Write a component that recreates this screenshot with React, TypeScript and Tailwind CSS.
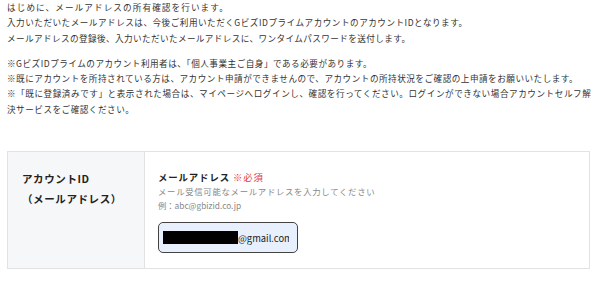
const App = () => {
  return (
    <div
      className="w-[600px] h-[282px] bg-white text-[#333] overflow-hidden pl-[7px]"
      style={{ fontFamily: '"Noto Sans CJK JP", "Noto Sans", sans-serif' }}
    >
      <div className="text-[8.6px] tracking-[0.5px] leading-[15.3px] whitespace-nowrap">
        <p className="tracking-[1.1px]">はじめに、メールアドレスの所有確認を行います。</p>
        <p>入力いただいたメールアドレスは、今後ご利用いただくGビズIDプライムアカウントのアカウントIDとなります。</p>
        <p className="tracking-[0.4px]">メールアドレスの登録後、入力いただいたメールアドレスに、ワンタイムパスワードを送付します。</p>
        <div className="mt-[10px]">
          <p>※GビズIDプライムのアカウント利用者は、「個人事業主ご自身」である必要があります。</p>
          <p>※既にアカウントを所持されている方は、アカウント申請ができませんので、アカウントの所持状況をご確認の上申請をお願いいたします。</p>
          <p className="tracking-[0.55px]">※「既に登録済みです」と表示された場合は、マイページへログインし、確認を行ってください。ログインができない場合アカウントセルフ解</p>
          <p>決サービスをご確認ください。</p>
        </div>
      </div>

      <div className="mt-[34px] w-[583px] h-[118px] grid grid-cols-[137px_1fr] border border-[#e2e2e2]">
        <div className="bg-[#f6f7f9] border-r border-[#e2e2e2] pl-[14px] pt-[17px] text-[10.5px] font-bold tracking-[0.6px] leading-[20px] text-[#222]">
          <p>アカウントID</p>
          <p>（メールアドレス）</p>
        </div>
        <div className="pl-[13px] pt-[18px]">
          <p className="text-[9.4px] font-bold tracking-[0.9px] leading-[14px] text-[#222]">
            メールアドレス <span className="text-[#e03c3c] font-normal">※必須</span>
          </p>
          <p className="text-[8.4px] tracking-[0.7px] leading-[14px] text-[#888]">
            メール受信可能なメールアドレスを入力してください
          </p>
          <p className="text-[8.3px] leading-[14px] text-[#888]">
            例：abc@gbizid.co.jp
          </p>
          <div className="mt-[10px] w-[140px] h-[31px] rounded-[5px] border border-[#444] bg-[#e8f0fe] flex items-center pl-[4px] pr-[8px] overflow-hidden">
            <div className="flex items-center whitespace-nowrap overflow-hidden">
              <span className="block shrink-0 w-[75px] h-[13px] bg-black" />
              <span className="text-[9.4px] text-[#222]">@gmail.com</span>
            </div>
          </div>
        </div>
      </div>
    </div>
  );
};

export default App;
